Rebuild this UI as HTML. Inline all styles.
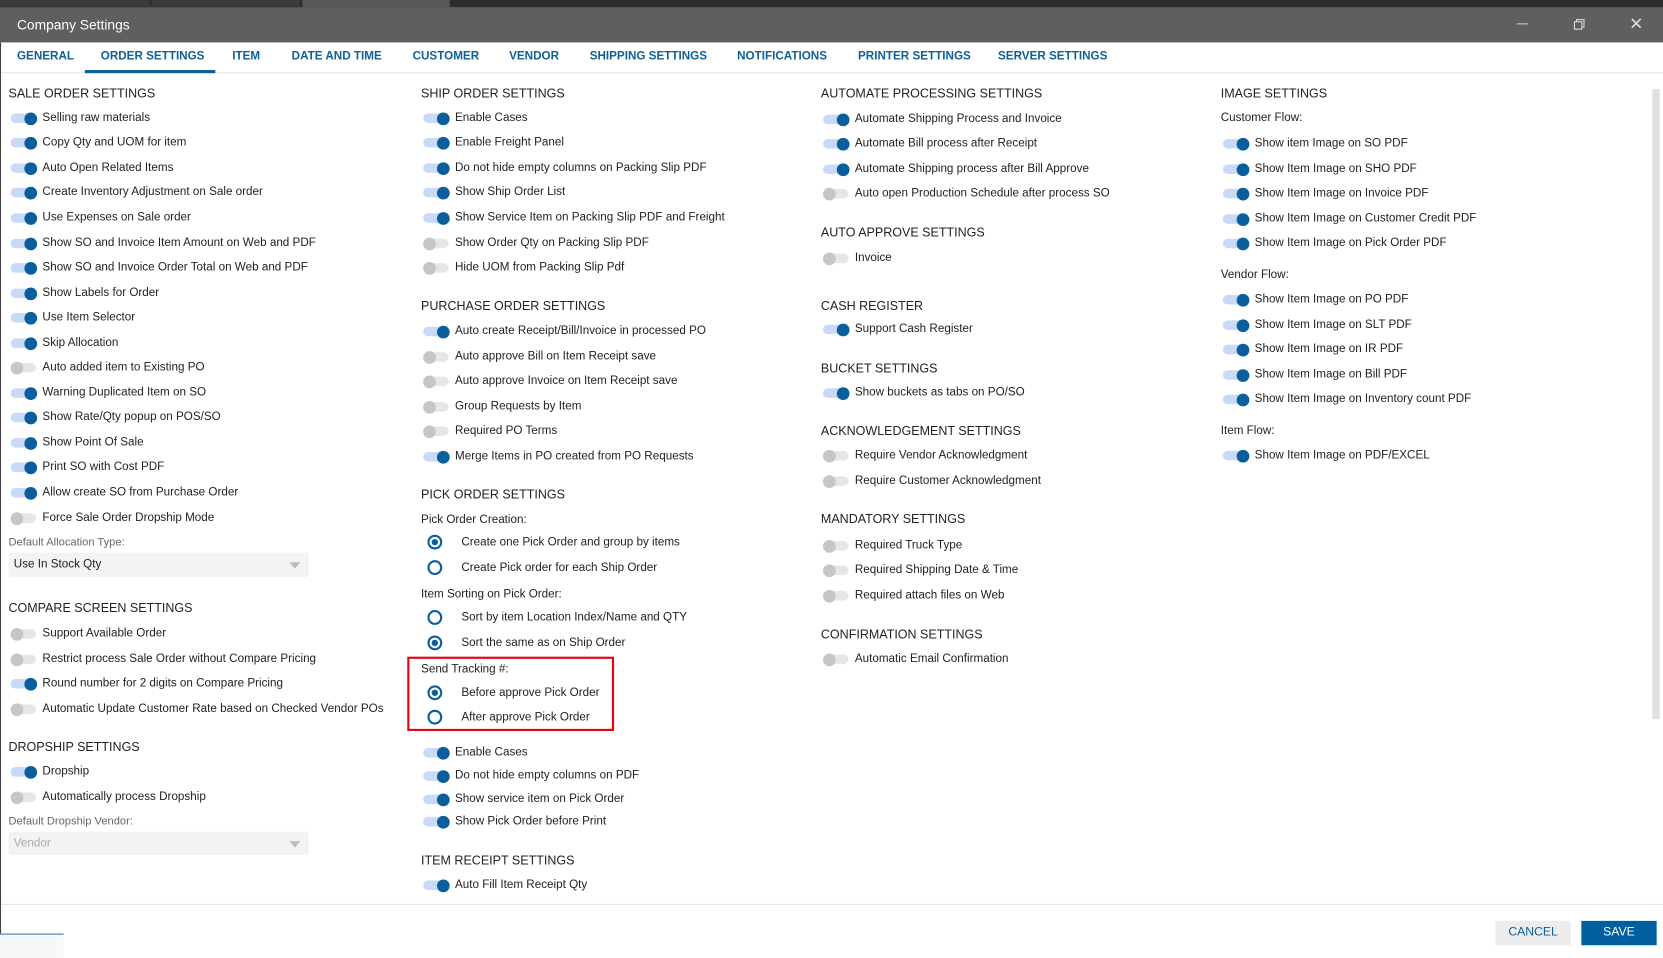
<!DOCTYPE html>
<html><head><meta charset="utf-8">
<style>
*{margin:0;padding:0;box-sizing:border-box}
html,body{width:1663px;height:958px;overflow:hidden;background:#fff}
#w{position:absolute;left:0;top:0;width:1568px;height:903px;transform:scale(1.06059,1.06091);transform-origin:0 0;font-family:"Liberation Sans",sans-serif;font-size:11px;color:#222}
.a{position:absolute;white-space:nowrap}
.r{position:absolute;height:16px;line-height:16px;margin-top:-8px;white-space:nowrap;padding-left:32px}
.r::before{content:"";position:absolute;left:2px;top:4px;width:24px;height:9px;border-radius:5px;background:#c9daf8}
.r::after{content:"";position:absolute;left:15px;top:2.5px;width:12px;height:12px;border-radius:50%;background:#0a5e9c}
.r.o::before{background:#e6e6e6}
.r.o::after{left:2px;background:#c6c6c6}
.h{position:absolute;font-size:11.8px;color:#222;margin-top:-8px;height:16px;line-height:16px;white-space:nowrap}
.l{position:absolute;margin-top:-8px;height:16px;line-height:16px;white-space:nowrap}
.g{color:#666;font-size:10.5px}
.rd{position:absolute;height:16px;line-height:16px;margin-top:-8px;white-space:nowrap;padding-left:38px}
.rd::before{content:"";position:absolute;left:6px;top:1px;width:14px;height:14px;border:2px solid #0a5e9c;border-radius:50%;box-sizing:border-box}
.rd.on::after{content:"";position:absolute;left:10px;top:5px;width:6px;height:6px;border-radius:50%;background:#0a5e9c}
.tab{position:absolute;top:47px;font-size:11px;font-weight:bold;color:#0f5f99;white-space:nowrap}
.dd{position:absolute;left:8px;width:283px;height:23px;background:#f3f3f3;border-radius:2px;line-height:23px;padding-left:5px}
.dd::after{content:"";position:absolute;right:8px;top:9px;border-left:5px solid transparent;border-right:5px solid transparent;border-top:6px solid #bbb}
</style></head><body><div id="w">
<div class="a" style="left:0;top:0;width:1568px;height:7px;background:#2d2d2d"></div>
<div class="a" style="left:0;top:0;width:141px;height:7px;background:#3b3b3b"></div>
<div class="a" style="left:143px;top:0;width:140px;height:7px;background:#3b3b3b"></div>
<div class="a" style="left:285px;top:0;width:139px;height:7px;background:#565656"></div>
<div class="a" style="left:0;top:7px;width:1568px;height:33px;background:#5f5f5f"></div>
<div class="a" style="left:16px;top:16px;color:#fff;font-size:13px">Company Settings</div>
<div class="a" style="left:1430px;top:22px;width:11px;height:1px;background:#ccc"></div>
<div class="a" style="left:1486px;top:18px;width:8px;height:8px;border:1px solid #ddd;background:#5f5f5f"></div>
<div class="a" style="left:1484px;top:20px;width:8px;height:8px;border:1px solid #ddd;background:#5f5f5f"></div>
<div class="a" style="left:1536px;top:13px;color:#ddd;font-size:16px">✕</div>
<div class="a" style="left:0;top:40px;width:1px;height:840px;background:#444"></div>
<div class="tab" style="left:16px">GENERAL</div>
<div class="tab" style="left:95px">ORDER SETTINGS</div>
<div class="tab" style="left:219px">ITEM</div>
<div class="tab" style="left:275px">DATE AND TIME</div>
<div class="tab" style="left:389px">CUSTOMER</div>
<div class="tab" style="left:480px">VENDOR</div>
<div class="tab" style="left:556px">SHIPPING SETTINGS</div>
<div class="tab" style="left:695px">NOTIFICATIONS</div>
<div class="tab" style="left:809px">PRINTER SETTINGS</div>
<div class="tab" style="left:941px">SERVER SETTINGS</div>
<div class="a" style="left:1px;top:68px;width:1567px;height:1px;background:#e6e6e6"></div>
<div class="a" style="left:80px;top:66px;width:123px;height:3px;background:#0f5f99"></div>

<!-- col1 -->
<div class="h" style="left:8px;top:88px">SALE ORDER SETTINGS</div>
<div class="r" style="left:8px;top:111px">Selling raw materials</div>
<div class="r" style="left:8px;top:134px">Copy Qty and UOM for item</div>
<div class="r" style="left:8px;top:158px">Auto Open Related Items</div>
<div class="r" style="left:8px;top:181px">Create Inventory Adjustment on Sale order</div>
<div class="r" style="left:8px;top:205px">Use Expenses on Sale order</div>
<div class="r" style="left:8px;top:229px">Show SO and Invoice Item Amount on Web and PDF</div>
<div class="r" style="left:8px;top:252px">Show SO and Invoice Order Total on Web and PDF</div>
<div class="r" style="left:8px;top:276px">Show Labels for Order</div>
<div class="r" style="left:8px;top:299px">Use Item Selector</div>
<div class="r" style="left:8px;top:323px">Skip Allocation</div>
<div class="r o" style="left:8px;top:346px">Auto added item to Existing PO</div>
<div class="r" style="left:8px;top:370px">Warning Duplicated Item on SO</div>
<div class="r" style="left:8px;top:393px">Show Rate/Qty popup on POS/SO</div>
<div class="r" style="left:8px;top:417px">Show Point Of Sale</div>
<div class="r" style="left:8px;top:440px">Print SO with Cost PDF</div>
<div class="r" style="left:8px;top:464px">Allow create SO from Purchase Order</div>
<div class="r o" style="left:8px;top:488px">Force Sale Order Dropship Mode</div>
<div class="l g" style="left:8px;top:511px">Default Allocation Type:</div>
<div class="dd" style="top:521px">Use In Stock Qty</div>
<div class="h" style="left:8px;top:573px">COMPARE SCREEN SETTINGS</div>
<div class="r o" style="left:8px;top:597px">Support Available Order</div>
<div class="r o" style="left:8px;top:621px">Restrict process Sale Order without Compare Pricing</div>
<div class="r" style="left:8px;top:644px">Round number for 2 digits on Compare Pricing</div>
<div class="r o" style="left:8px;top:668px">Automatic Update Customer Rate based on Checked Vendor POs</div>
<div class="h" style="left:8px;top:704px">DROPSHIP SETTINGS</div>
<div class="r" style="left:8px;top:727px">Dropship</div>
<div class="r o" style="left:8px;top:751px">Automatically process Dropship</div>
<div class="l g" style="left:8px;top:774px">Default Dropship Vendor:</div>
<div class="dd" style="top:784px;height:22px;line-height:22px;color:#aaa">Vendor</div>

<!-- col2 -->
<div class="h" style="left:397px;top:88px">SHIP ORDER SETTINGS</div>
<div class="r" style="left:397px;top:111px">Enable Cases</div>
<div class="r" style="left:397px;top:134px">Enable Freight Panel</div>
<div class="r" style="left:397px;top:158px">Do not hide empty columns on Packing Slip PDF</div>
<div class="r" style="left:397px;top:181px">Show Ship Order List</div>
<div class="r" style="left:397px;top:205px">Show Service Item on Packing Slip PDF and Freight</div>
<div class="r o" style="left:397px;top:229px">Show Order Qty on Packing Slip PDF</div>
<div class="r o" style="left:397px;top:252px">Hide UOM from Packing Slip Pdf</div>
<div class="h" style="left:397px;top:288px">PURCHASE ORDER SETTINGS</div>
<div class="r" style="left:397px;top:312px">Auto create Receipt/Bill/Invoice in processed PO</div>
<div class="r o" style="left:397px;top:336px">Auto approve Bill on Item Receipt save</div>
<div class="r o" style="left:397px;top:359px">Auto approve Invoice on Item Receipt save</div>
<div class="r o" style="left:397px;top:383px">Group Requests by Item</div>
<div class="r o" style="left:397px;top:406px">Required PO Terms</div>
<div class="r" style="left:397px;top:430px">Merge Items in PO created from PO Requests</div>
<div class="h" style="left:397px;top:466px">PICK ORDER SETTINGS</div>
<div class="l" style="left:397px;top:490px">Pick Order Creation:</div>
<div class="rd on" style="left:397px;top:511px">Create one Pick Order and group by items</div>
<div class="rd" style="left:397px;top:535px">Create Pick order for each Ship Order</div>
<div class="l" style="left:397px;top:560px">Item Sorting on Pick Order:</div>
<div class="rd" style="left:397px;top:582px">Sort by item Location Index/Name and QTY</div>
<div class="rd on" style="left:397px;top:606px">Sort the same as on Ship Order</div>
<div class="a" style="left:384px;top:619px;width:195px;height:70px;border:2px solid #e8000b"></div>
<div class="l" style="left:397px;top:631px">Send Tracking #:</div>
<div class="rd on" style="left:397px;top:653px">Before approve Pick Order</div>
<div class="rd" style="left:397px;top:676px">After approve Pick Order</div>
<div class="r" style="left:397px;top:709px">Enable Cases</div>
<div class="r" style="left:397px;top:731px">Do not hide empty columns on PDF</div>
<div class="r" style="left:397px;top:753px">Show service item on Pick Order</div>
<div class="r" style="left:397px;top:774px">Show Pick Order before Print</div>
<div class="h" style="left:397px;top:811px">ITEM RECEIPT SETTINGS</div>
<div class="r" style="left:397px;top:834px">Auto Fill Item Receipt Qty</div>

<!-- col3 -->
<div class="h" style="left:774px;top:88px">AUTOMATE PROCESSING SETTINGS</div>
<div class="r" style="left:774px;top:112px">Automate Shipping Process and Invoice</div>
<div class="r" style="left:774px;top:135px">Automate Bill process after Receipt</div>
<div class="r" style="left:774px;top:159px">Automate Shipping process after Bill Approve</div>
<div class="r o" style="left:774px;top:182px">Auto open Production Schedule after process SO</div>
<div class="h" style="left:774px;top:219px">AUTO APPROVE SETTINGS</div>
<div class="r o" style="left:774px;top:243px">Invoice</div>
<div class="h" style="left:774px;top:288px">CASH REGISTER</div>
<div class="r" style="left:774px;top:310px">Support Cash Register</div>
<div class="h" style="left:774px;top:347px">BUCKET SETTINGS</div>
<div class="r" style="left:774px;top:370px">Show buckets as tabs on PO/SO</div>
<div class="h" style="left:774px;top:406px">ACKNOWLEDGEMENT SETTINGS</div>
<div class="r o" style="left:774px;top:429px">Require Vendor Acknowledgment</div>
<div class="r o" style="left:774px;top:453px">Require Customer Acknowledgment</div>
<div class="h" style="left:774px;top:489px">MANDATORY SETTINGS</div>
<div class="r o" style="left:774px;top:514px">Required Truck Type</div>
<div class="r o" style="left:774px;top:537px">Required Shipping Date &amp; Time</div>
<div class="r o" style="left:774px;top:561px">Required attach files on Web</div>
<div class="h" style="left:774px;top:598px">CONFIRMATION SETTINGS</div>
<div class="r o" style="left:774px;top:621px">Automatic Email Confirmation</div>

<!-- col4 -->
<div class="h" style="left:1151px;top:88px">IMAGE SETTINGS</div>
<div class="l" style="left:1151px;top:111px">Customer Flow:</div>
<div class="r" style="left:1151px;top:135px">Show item Image on SO PDF</div>
<div class="r" style="left:1151px;top:159px">Show Item Image on SHO PDF</div>
<div class="r" style="left:1151px;top:182px">Show Item Image on Invoice PDF</div>
<div class="r" style="left:1151px;top:206px">Show Item Image on Customer Credit PDF</div>
<div class="r" style="left:1151px;top:229px">Show Item Image on Pick Order PDF</div>
<div class="l" style="left:1151px;top:259px">Vendor Flow:</div>
<div class="r" style="left:1151px;top:282px">Show Item Image on PO PDF</div>
<div class="r" style="left:1151px;top:306px">Show Item Image on SLT PDF</div>
<div class="r" style="left:1151px;top:329px">Show Item Image on IR PDF</div>
<div class="r" style="left:1151px;top:353px">Show Item Image on Bill PDF</div>
<div class="r" style="left:1151px;top:376px">Show Item Image on Inventory count PDF</div>
<div class="l" style="left:1151px;top:406px">Item Flow:</div>
<div class="r" style="left:1151px;top:429px">Show Item Image on PDF/EXCEL</div>

<!-- scrollbar -->
<div class="a" style="left:1558px;top:84px;width:7px;height:594px;background:#e0e0e0"></div>
<div class="a" style="left:1px;top:852px;width:1567px;height:1px;background:#e8e8e8"></div>
<div class="a" style="left:1410px;top:868px;width:71px;height:23px;background:#ececec;color:#0f5f99;text-align:center;line-height:23px;font-size:11.5px">CANCEL</div>
<div class="a" style="left:1491px;top:868px;width:71px;height:23px;background:#005f9e;color:#fff;text-align:center;line-height:23px;font-size:11.5px">SAVE</div>
<div class="a" style="left:0;top:880px;width:60px;height:1px;background:#0f6fc0"></div>
<div class="a" style="left:0;top:881px;width:60px;height:22px;background:#f8f8f8"></div>
</div></body></html>
